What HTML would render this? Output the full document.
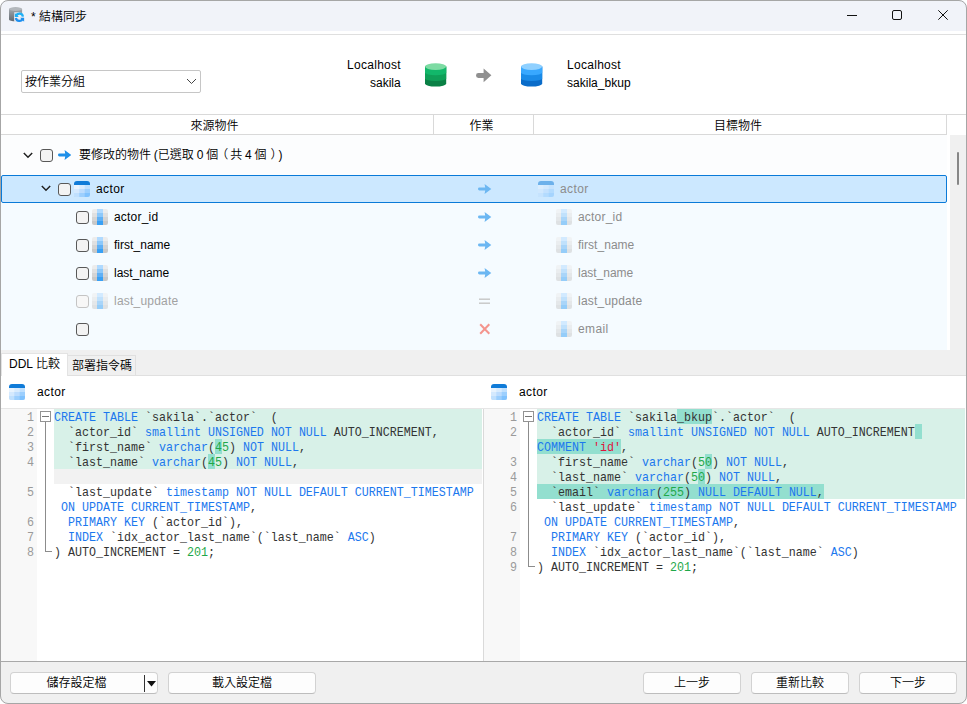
<!DOCTYPE html>
<html lang="zh-Hant">
<head>
<meta charset="utf-8">
<title>結構同步</title>
<style>
*{box-sizing:border-box;margin:0;padding:0}
html,body{width:967px;height:704px;overflow:hidden;background:#fff}
body{font-family:"Liberation Sans","Noto Sans CJK TC",sans-serif;font-size:12px;font-weight:350;color:#000;position:relative}
.abs{position:absolute}
#win{position:absolute;left:0;top:0;width:967px;height:704px;border-radius:8px;overflow:hidden;background:#fff}
#frame{position:absolute;left:0;top:0;width:967px;height:704px;border:1px solid #a6a6a6;border-radius:8px;pointer-events:none}
#title{position:absolute;left:0;top:0;width:967px;height:31px;background:#f1f3f9}
#title .txt{position:absolute;left:31px;top:9px;font-size:12px;line-height:16px;white-space:nowrap}
#tline{position:absolute;left:0;top:34px;width:967px;height:1px;background:#dfdfdf}
#combo{position:absolute;left:21px;top:70px;width:180px;height:23px;border:1px solid #c6c6c6;border-radius:2px;background:#fff}
#combo .txt{position:absolute;left:3px;top:3px;line-height:16px;font-size:12px}
.lbl{position:absolute;line-height:16px;white-space:nowrap;font-size:12px}
.hdr{position:absolute;top:114px;height:21px;border-top:1px solid #d9d9d9;border-bottom:1px solid #d9d9d9;border-right:1px solid #d9d9d9;text-align:center;line-height:19px;padding:2px 4px 0 0;font-size:12px;background:#fff}
#tree{position:absolute;left:0;top:135px;width:947px;height:215px;background:#fcfdfe}
#treeblue{position:absolute;left:0;top:68px;width:947px;height:147px;background:#f5fbff}
#sel{position:absolute;left:1px;top:40px;width:946px;height:28px;background:#cce8ff;border:1px solid #0a7ad8;border-radius:2px}
.t{position:absolute;line-height:16px;white-space:nowrap;font-size:12px}
.cb{position:absolute;width:13px;height:13px;border:1px solid #585858;border-radius:3px;background:#f3f3f3}
.cb.dis{border-color:#c4c4c4;background:#f7f7f7}
.gray{color:#8c8c8c}
.gray2{color:#a2a2a2}
.ws{word-spacing:-0.5px}
.ico{position:absolute;width:16px;height:16px}
.fade{opacity:.5}
#sbar{position:absolute;left:950px;top:135px;width:16px;height:215px;background:#f0f0f0}
#sbar i{position:absolute;left:7px;top:17px;width:2px;height:33px;background:#868686;border-radius:1px}
#tabs{position:absolute;left:0;top:350px;width:967px;height:26px;background:#f0f0f0;border-bottom:1px solid #e0e0e0}
#tab1{position:absolute;left:1px;top:353px;width:67px;height:23px;background:#fff;border:1px solid #e3e3e3;border-bottom:none}
#tab2{position:absolute;left:67px;top:355px;width:69px;height:20px;background:#f0f0f0;border:1px solid #e0e0e0;border-bottom:none}
.code{position:absolute;top:408px;height:253px;background:#fff;overflow:hidden}
.gut{position:absolute;left:0;top:0;width:36px;height:253px;background:#f8f8f8}
.hl{position:absolute;background:#d8f1e8}
.hd{position:absolute;background:#93dfcf}
.ln{margin-top:2px;transform:scaleY(1.06);transform-origin:0 80%;position:absolute;left:0;width:33px;text-align:right;color:#9a9a9a;font-family:"Liberation Mono",monospace;font-size:11.67px;line-height:15px}
.c{transform:scaleY(1.1);transform-origin:0 0;margin-top:1px;font-family:"Liberation Mono",monospace;font-size:11.67px;line-height:15px;position:absolute;white-space:pre;color:#333}
.k{color:#1c78ee}.n{color:#1fa84a}.s{color:#e0143c}
.fbox{position:absolute;width:11px;height:11px;border:1px solid #939393;background:#fff}
.fbox:after{content:"";position:absolute;left:1px;top:4px;width:7px;height:1px;background:#777}
.fline{position:absolute;width:1px;background:#8c8c8c}
#bottom{position:absolute;left:0;top:661px;width:967px;height:43px;background:#f0f0f0;border-top:1px solid #a8a8a8}
.btn{position:absolute;top:10px;height:22px;border:1px solid #d2d2d2;border-bottom-color:#bdbdbd;border-radius:4px;background:#fdfdfd;text-align:center;line-height:20px;font-size:12px}
</style>
</head>
<body>
<svg width="0" height="0" style="position:absolute"><defs><clipPath id="tc"><rect x="0" y="0" width="16" height="16" rx="3"/></clipPath><clipPath id="fc"><rect x="0" y="0" width="16" height="16" rx="2"/></clipPath></defs></svg>
<div id="win">
<!-- TITLE -->
<div id="title">
<svg class="abs" style="left:4px;top:2px" width="30" height="26" viewBox="4 2 30 26">
<defs><linearGradient id="gcyl" x1="0" y1="0" x2="0" y2="1"><stop offset="0" stop-color="#a3a8ad"/><stop offset=".35" stop-color="#8b9197"/><stop offset="1" stop-color="#636970"/></linearGradient>
<linearGradient id="gsy" x1="0" y1="0" x2="0" y2="1"><stop offset="0" stop-color="#1fb6f6"/><stop offset="1" stop-color="#1e8df0"/></linearGradient></defs>
<path d="M9 9 V19.4 a6.55 1.9 0 0 0 13.1 0 V9z" fill="url(#gcyl)"/>
<ellipse cx="15.55" cy="9" rx="6.55" ry="1.9" fill="#b3b7bc"/>
<rect x="14.2" y="12.3" width="5" height="9.4" fill="#eef0f5"/>
<circle cx="19.4" cy="17.3" r="4.9" fill="#eef0f5"/>
<path d="M16.1 16.1 A3.5 3.5 0 0 1 22.9 16.6" fill="none" stroke="#1fb0f5" stroke-width="2.3"/>
<path d="M22.7 18.5 A3.5 3.5 0 0 1 15.9 18" fill="none" stroke="#1e90f0" stroke-width="2.3"/>
<path d="M14.8 12.9 V16.9 H18.8z" fill="#1fb0f5"/>
<path d="M24.1 21.7 V17.7 H20.1z" fill="#1e90f0"/>
</svg>
<span class="txt">* 結構同步</span>
<svg class="abs" style="left:847px;top:14px" width="11" height="3"><rect x="0" y="1" width="10" height="1" fill="#111"/></svg>
<svg class="abs" style="left:892px;top:10px" width="11" height="11"><rect x="0.5" y="0.5" width="9" height="9" rx="1.5" fill="none" stroke="#111" stroke-width="1"/></svg>
<svg class="abs" style="left:938px;top:10px" width="11" height="11"><path d="M0.3 0.3 L9.7 9.7 M9.7 0.3 L0.3 9.7" stroke="#111" stroke-width="1" fill="none"/></svg>
</div>
<div id="tline"></div>

<!-- TOP PANEL -->
<div id="combo"><span class="txt">按作業分組</span>
<svg class="abs" style="left:164px;top:7px" width="11" height="7"><path d="M1 1 L5.5 5.5 L10 1" fill="none" stroke="#444" stroke-width="1"/></svg>
</div>
<span class="t " style="left:347px;top:57px;letter-spacing:0.29px">Localhost</span>
<span class="t " style="left:370px;top:75px;letter-spacing:-0.01px">sakila</span>
<span class="t " style="left:567px;top:57px;letter-spacing:0.29px">Localhost</span>
<span class="t " style="left:567px;top:75px;letter-spacing:0.02px">sakila_bkup</span>
<svg class="abs" style="left:425px;top:63px" width="22" height="25" viewBox="0 0 22 25">
<path d="M0 3.6 V20.6 a10.6 3 0 0 0 21.2 0 V3.6z" fill="#0a8045"/>
<path d="M0 3.6 V15.4 a10.6 2.6 0 0 0 21.2 0 V3.6z" fill="#0f9f58"/>
<path d="M0 3.6 V9.6 a10.6 2.6 0 0 0 21.2 0 V3.6z" fill="#12b76a"/>
<ellipse cx="10.6" cy="3.6" rx="10.6" ry="3.4" fill="#7ddba3"/>
</svg>
<svg class="abs" style="left:475px;top:67px" width="18" height="16" viewBox="0 0 18 16">
<path d="M3.4 6.1 H8.6 V1.4 L16.4 8.3 L8.6 15.2 V10.9 H3.4 A2.4 2.4 0 0 1 3.4 6.1z" fill="#8f8f8f"/>
</svg>
<svg class="abs" style="left:521px;top:63px" width="22" height="25" viewBox="0 0 22 25">
<path d="M0 3.6 V20.6 a10.6 3 0 0 0 21.2 0 V3.6z" fill="#0a6cc9"/>
<path d="M0 3.6 V15.4 a10.6 2.6 0 0 0 21.2 0 V3.6z" fill="#1a8be8"/>
<path d="M0 3.6 V9.6 a10.6 2.6 0 0 0 21.2 0 V3.6z" fill="#38a8ff"/>
<ellipse cx="10.6" cy="3.6" rx="10.6" ry="3.4" fill="#8fd0ff"/>
</svg>

<!-- HEADER -->
<div class="abs" style="left:0;top:114px;width:967px;height:1px;background:#d9d9d9"></div>
<div class="hdr" style="left:0;width:434px">來源物件</div>
<div class="hdr" style="left:434px;width:100px">作業</div>
<div class="hdr" style="left:534px;width:413px">目標物件</div>

<!-- TREE -->
<div id="tree">
<div id="treeblue"></div>
<div id="sel"></div>
</div>
<svg class="abs" style="left:23px;top:152px" width="10" height="7" viewBox="0 0 10 7"><path d="M0.8 1 L5 5.3 L9.2 1" fill="none" stroke="#222" stroke-width="1.5"/></svg>
<i class="cb" style="left:40px;top:149px"></i>
<svg class="abs" style="left:58px;top:149px" width="14" height="12" viewBox="0 0 14 12"><path d="M1.4 6 H8" stroke="#1e8fe8" stroke-width="2.8" stroke-linecap="round" fill="none"/><path d="M6.6 1 L13.3 6 L6.6 11 L7.4 6z" fill="#1e8fe8"/></svg>
<span class="t ws" style="left:79px;top:147px">要修改的物件 (已選取 0 個<span style="position:relative;left:-2px">（</span>共 4 個<span style="position:relative;left:4px">）</span><span style="margin-left:6px">)</span></span>
<svg class="abs" style="left:41px;top:185px" width="10" height="7" viewBox="0 0 10 7"><path d="M0.8 1 L5 5.3 L9.2 1" fill="none" stroke="#222" stroke-width="1.5"/></svg>
<i class="cb" style="left:58px;top:183px"></i>
<svg class="ico " style="left:74px;top:181px" viewBox="0 0 16 16"><g clip-path="url(#tc)"><rect x="0" y="0" width="16" height="16" fill="#0f7bd8"/><rect x="0" y="4" width="16" height="12" fill="#e8f3fe"/><rect x="5.3" y="4" width="10.7" height="12" fill="#d8ebfe"/><rect x="10.7" y="4" width="5.3" height="12" fill="#c0e0fe"/><rect x="0" y="8" width="16" height="8" fill="#d4e9fe"/><rect x="5.3" y="8" width="10.7" height="8" fill="#bcdcfe"/><rect x="10.7" y="8" width="5.3" height="8" fill="#9ccffe"/><rect x="0" y="12" width="16" height="4" fill="#c0e0fe"/><rect x="5.3" y="12" width="10.7" height="4" fill="#9ccffe"/><rect x="10.7" y="12" width="5.3" height="4" fill="#80c2fe"/></g></svg>
<span class="t " style="left:96px;top:181px;letter-spacing:0.4px">actor</span>
<svg class="abs" style="left:478px;top:183px" width="14" height="12" viewBox="0 0 14 12"><path d="M1.4 6 H8" stroke="#6cb7f2" stroke-width="2.8" stroke-linecap="round" fill="none"/><path d="M6.6 1 L13.3 6 L6.6 11 L7.4 6z" fill="#6cb7f2"/></svg>
<svg class="ico fade" style="left:538px;top:181px" viewBox="0 0 16 16"><g clip-path="url(#tc)"><rect x="0" y="0" width="16" height="16" fill="#0f7bd8"/><rect x="0" y="4" width="16" height="12" fill="#e8f3fe"/><rect x="5.3" y="4" width="10.7" height="12" fill="#d8ebfe"/><rect x="10.7" y="4" width="5.3" height="12" fill="#c0e0fe"/><rect x="0" y="8" width="16" height="8" fill="#d4e9fe"/><rect x="5.3" y="8" width="10.7" height="8" fill="#bcdcfe"/><rect x="10.7" y="8" width="5.3" height="8" fill="#9ccffe"/><rect x="0" y="12" width="16" height="4" fill="#c0e0fe"/><rect x="5.3" y="12" width="10.7" height="4" fill="#9ccffe"/><rect x="10.7" y="12" width="5.3" height="4" fill="#80c2fe"/></g></svg>
<span class="t gray" style="left:560px;top:181px;letter-spacing:0.4px">actor</span>
<i class="cb" style="left:76px;top:211px"></i>
<svg class="ico " style="left:92px;top:209px" viewBox="0 0 16 16"><g clip-path="url(#fc)"><rect x="0" y="0" width="16" height="4" fill="#ececec"/><rect x="0" y="4" width="16" height="4" fill="#e0e0e0"/><rect x="0" y="8" width="16" height="4" fill="#d4d4d4"/><rect x="0" y="12" width="16" height="4" fill="#c8c8c8"/><rect x="5" y="0" width="6" height="4" fill="#b0daff"/><rect x="5" y="4" width="6" height="4" fill="#8cc8fa"/><rect x="5" y="8" width="6" height="4" fill="#60b0f5"/><rect x="5" y="12" width="6" height="4" fill="#38a0f5"/></g></svg>
<span class="t " style="left:114px;top:209px;letter-spacing:0.2px">actor_id</span>
<svg class="abs" style="left:478px;top:211px" width="14" height="12" viewBox="0 0 14 12"><path d="M1.4 6 H8" stroke="#6cb7f2" stroke-width="2.8" stroke-linecap="round" fill="none"/><path d="M6.6 1 L13.3 6 L6.6 11 L7.4 6z" fill="#6cb7f2"/></svg>
<svg class="ico fade" style="left:556px;top:209px" viewBox="0 0 16 16"><g clip-path="url(#fc)"><rect x="0" y="0" width="16" height="4" fill="#ececec"/><rect x="0" y="4" width="16" height="4" fill="#e0e0e0"/><rect x="0" y="8" width="16" height="4" fill="#d4d4d4"/><rect x="0" y="12" width="16" height="4" fill="#c8c8c8"/><rect x="5" y="0" width="6" height="4" fill="#b0daff"/><rect x="5" y="4" width="6" height="4" fill="#8cc8fa"/><rect x="5" y="8" width="6" height="4" fill="#60b0f5"/><rect x="5" y="12" width="6" height="4" fill="#38a0f5"/></g></svg>
<span class="t gray" style="left:578px;top:209px;letter-spacing:0.2px">actor_id</span>
<i class="cb" style="left:76px;top:239px"></i>
<svg class="ico " style="left:92px;top:237px" viewBox="0 0 16 16"><g clip-path="url(#fc)"><rect x="0" y="0" width="16" height="4" fill="#ececec"/><rect x="0" y="4" width="16" height="4" fill="#e0e0e0"/><rect x="0" y="8" width="16" height="4" fill="#d4d4d4"/><rect x="0" y="12" width="16" height="4" fill="#c8c8c8"/><rect x="5" y="0" width="6" height="4" fill="#b0daff"/><rect x="5" y="4" width="6" height="4" fill="#8cc8fa"/><rect x="5" y="8" width="6" height="4" fill="#60b0f5"/><rect x="5" y="12" width="6" height="4" fill="#38a0f5"/></g></svg>
<span class="t " style="left:114px;top:237px;letter-spacing:0.03px">first_name</span>
<svg class="abs" style="left:478px;top:239px" width="14" height="12" viewBox="0 0 14 12"><path d="M1.4 6 H8" stroke="#6cb7f2" stroke-width="2.8" stroke-linecap="round" fill="none"/><path d="M6.6 1 L13.3 6 L6.6 11 L7.4 6z" fill="#6cb7f2"/></svg>
<svg class="ico fade" style="left:556px;top:237px" viewBox="0 0 16 16"><g clip-path="url(#fc)"><rect x="0" y="0" width="16" height="4" fill="#ececec"/><rect x="0" y="4" width="16" height="4" fill="#e0e0e0"/><rect x="0" y="8" width="16" height="4" fill="#d4d4d4"/><rect x="0" y="12" width="16" height="4" fill="#c8c8c8"/><rect x="5" y="0" width="6" height="4" fill="#b0daff"/><rect x="5" y="4" width="6" height="4" fill="#8cc8fa"/><rect x="5" y="8" width="6" height="4" fill="#60b0f5"/><rect x="5" y="12" width="6" height="4" fill="#38a0f5"/></g></svg>
<span class="t gray" style="left:578px;top:237px;letter-spacing:0.03px">first_name</span>
<i class="cb" style="left:76px;top:267px"></i>
<svg class="ico " style="left:92px;top:265px" viewBox="0 0 16 16"><g clip-path="url(#fc)"><rect x="0" y="0" width="16" height="4" fill="#ececec"/><rect x="0" y="4" width="16" height="4" fill="#e0e0e0"/><rect x="0" y="8" width="16" height="4" fill="#d4d4d4"/><rect x="0" y="12" width="16" height="4" fill="#c8c8c8"/><rect x="5" y="0" width="6" height="4" fill="#b0daff"/><rect x="5" y="4" width="6" height="4" fill="#8cc8fa"/><rect x="5" y="8" width="6" height="4" fill="#60b0f5"/><rect x="5" y="12" width="6" height="4" fill="#38a0f5"/></g></svg>
<span class="t " style="left:114px;top:265px;letter-spacing:-0.02px">last_name</span>
<svg class="abs" style="left:478px;top:267px" width="14" height="12" viewBox="0 0 14 12"><path d="M1.4 6 H8" stroke="#6cb7f2" stroke-width="2.8" stroke-linecap="round" fill="none"/><path d="M6.6 1 L13.3 6 L6.6 11 L7.4 6z" fill="#6cb7f2"/></svg>
<svg class="ico fade" style="left:556px;top:265px" viewBox="0 0 16 16"><g clip-path="url(#fc)"><rect x="0" y="0" width="16" height="4" fill="#ececec"/><rect x="0" y="4" width="16" height="4" fill="#e0e0e0"/><rect x="0" y="8" width="16" height="4" fill="#d4d4d4"/><rect x="0" y="12" width="16" height="4" fill="#c8c8c8"/><rect x="5" y="0" width="6" height="4" fill="#b0daff"/><rect x="5" y="4" width="6" height="4" fill="#8cc8fa"/><rect x="5" y="8" width="6" height="4" fill="#60b0f5"/><rect x="5" y="12" width="6" height="4" fill="#38a0f5"/></g></svg>
<span class="t gray" style="left:578px;top:265px;letter-spacing:-0.02px">last_name</span>
<i class="cb dis" style="left:76px;top:295px"></i>
<svg class="ico fade" style="left:92px;top:293px" viewBox="0 0 16 16"><g clip-path="url(#fc)"><rect x="0" y="0" width="16" height="4" fill="#ececec"/><rect x="0" y="4" width="16" height="4" fill="#e0e0e0"/><rect x="0" y="8" width="16" height="4" fill="#d4d4d4"/><rect x="0" y="12" width="16" height="4" fill="#c8c8c8"/><rect x="5" y="0" width="6" height="4" fill="#b0daff"/><rect x="5" y="4" width="6" height="4" fill="#8cc8fa"/><rect x="5" y="8" width="6" height="4" fill="#60b0f5"/><rect x="5" y="12" width="6" height="4" fill="#38a0f5"/></g></svg>
<span class="t gray2" style="left:114px;top:293px;letter-spacing:0.21px">last_update</span>
<svg class="abs" style="left:479px;top:298px" width="12" height="7"><rect x="0" y="0.5" width="11" height="1.4" fill="#c6c6c6"/><rect x="0" y="4.5" width="11" height="1.4" fill="#c6c6c6"/></svg>
<svg class="ico fade" style="left:556px;top:293px" viewBox="0 0 16 16"><g clip-path="url(#fc)"><rect x="0" y="0" width="16" height="4" fill="#ececec"/><rect x="0" y="4" width="16" height="4" fill="#e0e0e0"/><rect x="0" y="8" width="16" height="4" fill="#d4d4d4"/><rect x="0" y="12" width="16" height="4" fill="#c8c8c8"/><rect x="5" y="0" width="6" height="4" fill="#b0daff"/><rect x="5" y="4" width="6" height="4" fill="#8cc8fa"/><rect x="5" y="8" width="6" height="4" fill="#60b0f5"/><rect x="5" y="12" width="6" height="4" fill="#38a0f5"/></g></svg>
<span class="t gray" style="left:578px;top:293px;letter-spacing:0.21px">last_update</span>
<i class="cb" style="left:76px;top:323px"></i>
<svg class="abs" style="left:479px;top:323px" width="12" height="12"><path d="M1.2 1.2 L10.3 10.8 M10.3 1.2 L1.2 10.8" stroke="#f4958e" stroke-width="2" fill="none"/></svg>
<svg class="ico fade" style="left:556px;top:321px" viewBox="0 0 16 16"><g clip-path="url(#fc)"><rect x="0" y="0" width="16" height="4" fill="#ececec"/><rect x="0" y="4" width="16" height="4" fill="#e0e0e0"/><rect x="0" y="8" width="16" height="4" fill="#d4d4d4"/><rect x="0" y="12" width="16" height="4" fill="#c8c8c8"/><rect x="5" y="0" width="6" height="4" fill="#b0daff"/><rect x="5" y="4" width="6" height="4" fill="#8cc8fa"/><rect x="5" y="8" width="6" height="4" fill="#60b0f5"/><rect x="5" y="12" width="6" height="4" fill="#38a0f5"/></g></svg>
<span class="t gray" style="left:578px;top:321px;letter-spacing:0.36px">email</span>
<div id="sbar"><i></i></div>

<!-- TABS -->
<div id="tabs"></div>
<div id="tab2"><span class="t" style="left:4px;top:2px">部署指令碼</span></div>
<div id="tab1"><span class="t" style="left:7px;top:2px">DDL 比較</span></div>

<!-- CODE -->
<svg class="ico " style="left:9px;top:384px" viewBox="0 0 16 16"><g clip-path="url(#tc)"><rect x="0" y="0" width="16" height="16" fill="#0f7bd8"/><rect x="0" y="4" width="16" height="12" fill="#e8f3fe"/><rect x="5.3" y="4" width="10.7" height="12" fill="#d8ebfe"/><rect x="10.7" y="4" width="5.3" height="12" fill="#c0e0fe"/><rect x="0" y="8" width="16" height="8" fill="#d4e9fe"/><rect x="5.3" y="8" width="10.7" height="8" fill="#bcdcfe"/><rect x="10.7" y="8" width="5.3" height="8" fill="#9ccffe"/><rect x="0" y="12" width="16" height="4" fill="#c0e0fe"/><rect x="5.3" y="12" width="10.7" height="4" fill="#9ccffe"/><rect x="10.7" y="12" width="5.3" height="4" fill="#80c2fe"/></g></svg>
<span class="t " style="left:37px;top:384px;letter-spacing:0.4px">actor</span>
<svg class="ico " style="left:491px;top:384px" viewBox="0 0 16 16"><g clip-path="url(#tc)"><rect x="0" y="0" width="16" height="16" fill="#0f7bd8"/><rect x="0" y="4" width="16" height="12" fill="#e8f3fe"/><rect x="5.3" y="4" width="10.7" height="12" fill="#d8ebfe"/><rect x="10.7" y="4" width="5.3" height="12" fill="#c0e0fe"/><rect x="0" y="8" width="16" height="8" fill="#d4e9fe"/><rect x="5.3" y="8" width="10.7" height="8" fill="#bcdcfe"/><rect x="10.7" y="8" width="5.3" height="8" fill="#9ccffe"/><rect x="0" y="12" width="16" height="4" fill="#c0e0fe"/><rect x="5.3" y="12" width="10.7" height="4" fill="#9ccffe"/><rect x="10.7" y="12" width="5.3" height="4" fill="#80c2fe"/></g></svg>
<span class="t " style="left:519px;top:384px;letter-spacing:0.4px">actor</span>
<div class="code" id="cl" style="left:0;width:482px"><div class="gut" style="width:37px"></div>
<div class="hl" style="left:54px;top:1px;width:428px;height:60px"></div>
<div class="abs" style="left:54px;top:61px;width:428px;height:15px;background:#f2f2f2"></div>
<div class="hd" style="left:215px;top:31px;width:7px;height:15px"></div>
<div class="hd" style="left:208px;top:46px;width:7px;height:15px"></div>
<span class="ln" style="top:1px;width:34px">1</span>
<span class="c" style="left:54px;top:1px"><span class="k">CREATE</span> <span class="k">TABLE</span> `sakila`.`actor`  (</span>
<span class="ln" style="top:16px;width:34px">2</span>
<span class="c" style="left:54px;top:16px">  `actor_id` <span class="k">smallint</span> <span class="k">UNSIGNED</span> <span class="k">NOT</span> <span class="k">NULL</span> AUTO_INCREMENT,</span>
<span class="ln" style="top:31px;width:34px">3</span>
<span class="c" style="left:54px;top:31px">  `first_name` <span class="k">varchar</span>(<span class="n">45</span>) <span class="k">NOT</span> <span class="k">NULL</span>,</span>
<span class="ln" style="top:46px;width:34px">4</span>
<span class="c" style="left:54px;top:46px">  `last_name` <span class="k">varchar</span>(<span class="n">45</span>) <span class="k">NOT</span> <span class="k">NULL</span>,</span>
<span class="ln" style="top:76px;width:34px">5</span>
<span class="c" style="left:54px;top:76px">  `last_update` <span class="k">timestamp</span> <span class="k">NOT</span> <span class="k">NULL</span> <span class="k">DEFAULT</span> <span class="k">CURRENT_TIMESTAMP</span></span>
<span class="c" style="left:54px;top:91px"> <span class="k">ON</span> <span class="k">UPDATE</span> <span class="k">CURRENT_TIMESTAMP</span>,</span>
<span class="ln" style="top:106px;width:34px">6</span>
<span class="c" style="left:54px;top:106px">  <span class="k">PRIMARY</span> <span class="k">KEY</span> (`actor_id`),</span>
<span class="ln" style="top:121px;width:34px">7</span>
<span class="c" style="left:54px;top:121px">  <span class="k">INDEX</span> `idx_actor_last_name`(`last_name` <span class="k">ASC</span>)</span>
<span class="ln" style="top:136px;width:34px">8</span>
<span class="c" style="left:54px;top:136px">) AUTO_INCREMENT = <span class="n">201</span>;</span>
<i class="fbox" style="left:40px;top:3px"></i>
<i class="fline" style="left:45px;top:14px;height:129px"></i>
<i class="abs" style="left:45px;top:143px;width:7px;height:1px;background:#8c8c8c"></i>
</div>
<div class="abs" style="left:483px;top:408px;width:1px;height:253px;background:#dadada"></div>
<div class="code" id="cr" style="left:484px;width:481px"><div class="gut"></div>
<div class="hl" style="left:53px;top:1px;width:428px;height:90px"></div>
<div class="hd" style="left:193px;top:1px;width:35px;height:15px"></div>
<div class="hd" style="left:431px;top:16px;width:7px;height:15px"></div>
<div class="hd" style="left:53px;top:31px;width:84px;height:15px"></div>
<div class="hd" style="left:221px;top:46px;width:7px;height:15px"></div>
<div class="hd" style="left:214px;top:61px;width:7px;height:15px"></div>
<div class="hd" style="left:53px;top:76px;width:287px;height:15px"></div>
<span class="ln" style="top:1px;width:33px">1</span>
<span class="c" style="left:53px;top:1px"><span class="k">CREATE</span> <span class="k">TABLE</span> `sakila_bkup`.`actor`  (</span>
<span class="ln" style="top:16px;width:33px">2</span>
<span class="c" style="left:53px;top:16px">  `actor_id` <span class="k">smallint</span> <span class="k">UNSIGNED</span> <span class="k">NOT</span> <span class="k">NULL</span> AUTO_INCREMENT </span>
<span class="c" style="left:53px;top:31px"><span class="k">COMMENT</span> <span class="s">'id'</span>,</span>
<span class="ln" style="top:46px;width:33px">3</span>
<span class="c" style="left:53px;top:46px">  `first_name` <span class="k">varchar</span>(<span class="n">50</span>) <span class="k">NOT</span> <span class="k">NULL</span>,</span>
<span class="ln" style="top:61px;width:33px">4</span>
<span class="c" style="left:53px;top:61px">  `last_name` <span class="k">varchar</span>(<span class="n">50</span>) <span class="k">NOT</span> <span class="k">NULL</span>,</span>
<span class="ln" style="top:76px;width:33px">5</span>
<span class="c" style="left:53px;top:76px">  `email` <span class="k">varchar</span>(<span class="n">255</span>) <span class="k">NULL</span> <span class="k">DEFAULT</span> <span class="k">NULL</span>,</span>
<span class="ln" style="top:91px;width:33px">6</span>
<span class="c" style="left:53px;top:91px">  `last_update` <span class="k">timestamp</span> <span class="k">NOT</span> <span class="k">NULL</span> <span class="k">DEFAULT</span> <span class="k">CURRENT_TIMESTAMP</span></span>
<span class="c" style="left:53px;top:106px"> <span class="k">ON</span> <span class="k">UPDATE</span> <span class="k">CURRENT_TIMESTAMP</span>,</span>
<span class="ln" style="top:121px;width:33px">7</span>
<span class="c" style="left:53px;top:121px">  <span class="k">PRIMARY</span> <span class="k">KEY</span> (`actor_id`),</span>
<span class="ln" style="top:136px;width:33px">8</span>
<span class="c" style="left:53px;top:136px">  <span class="k">INDEX</span> `idx_actor_last_name`(`last_name` <span class="k">ASC</span>)</span>
<span class="ln" style="top:151px;width:33px">9</span>
<span class="c" style="left:53px;top:151px">) AUTO_INCREMENT = <span class="n">201</span>;</span>
<i class="fbox" style="left:39px;top:3px"></i>
<i class="fline" style="left:44px;top:14px;height:144px"></i>
<i class="abs" style="left:44px;top:158px;width:7px;height:1px;background:#8c8c8c"></i>
</div>

<div class="abs" style="left:1px;top:408px;width:964px;height:1px;background:#e6e6e6"></div>
<!-- BOTTOM -->
<div id="bottom">
<div class="btn" style="left:10px;width:148px"><span class="abs" style="left:0;width:131px;text-align:center">儲存設定檔</span>
<i class="abs" style="left:133px;top:2px;width:1px;height:17px;background:#333"></i>
<svg class="abs" style="left:136px;top:8px" width="9" height="6"><path d="M0 0 H9 L4.5 5.5z" fill="#111"/></svg>
</div>
<div class="btn" style="left:168px;width:148px">載入設定檔</div>
<div class="btn" style="left:643px;width:98px">上一步</div>
<div class="btn" style="left:751px;width:98px">重新比較</div>
<div class="btn" style="left:859px;width:98px">下一步</div>
</div>
</div>
<div id="frame"></div>
</body>
</html>
